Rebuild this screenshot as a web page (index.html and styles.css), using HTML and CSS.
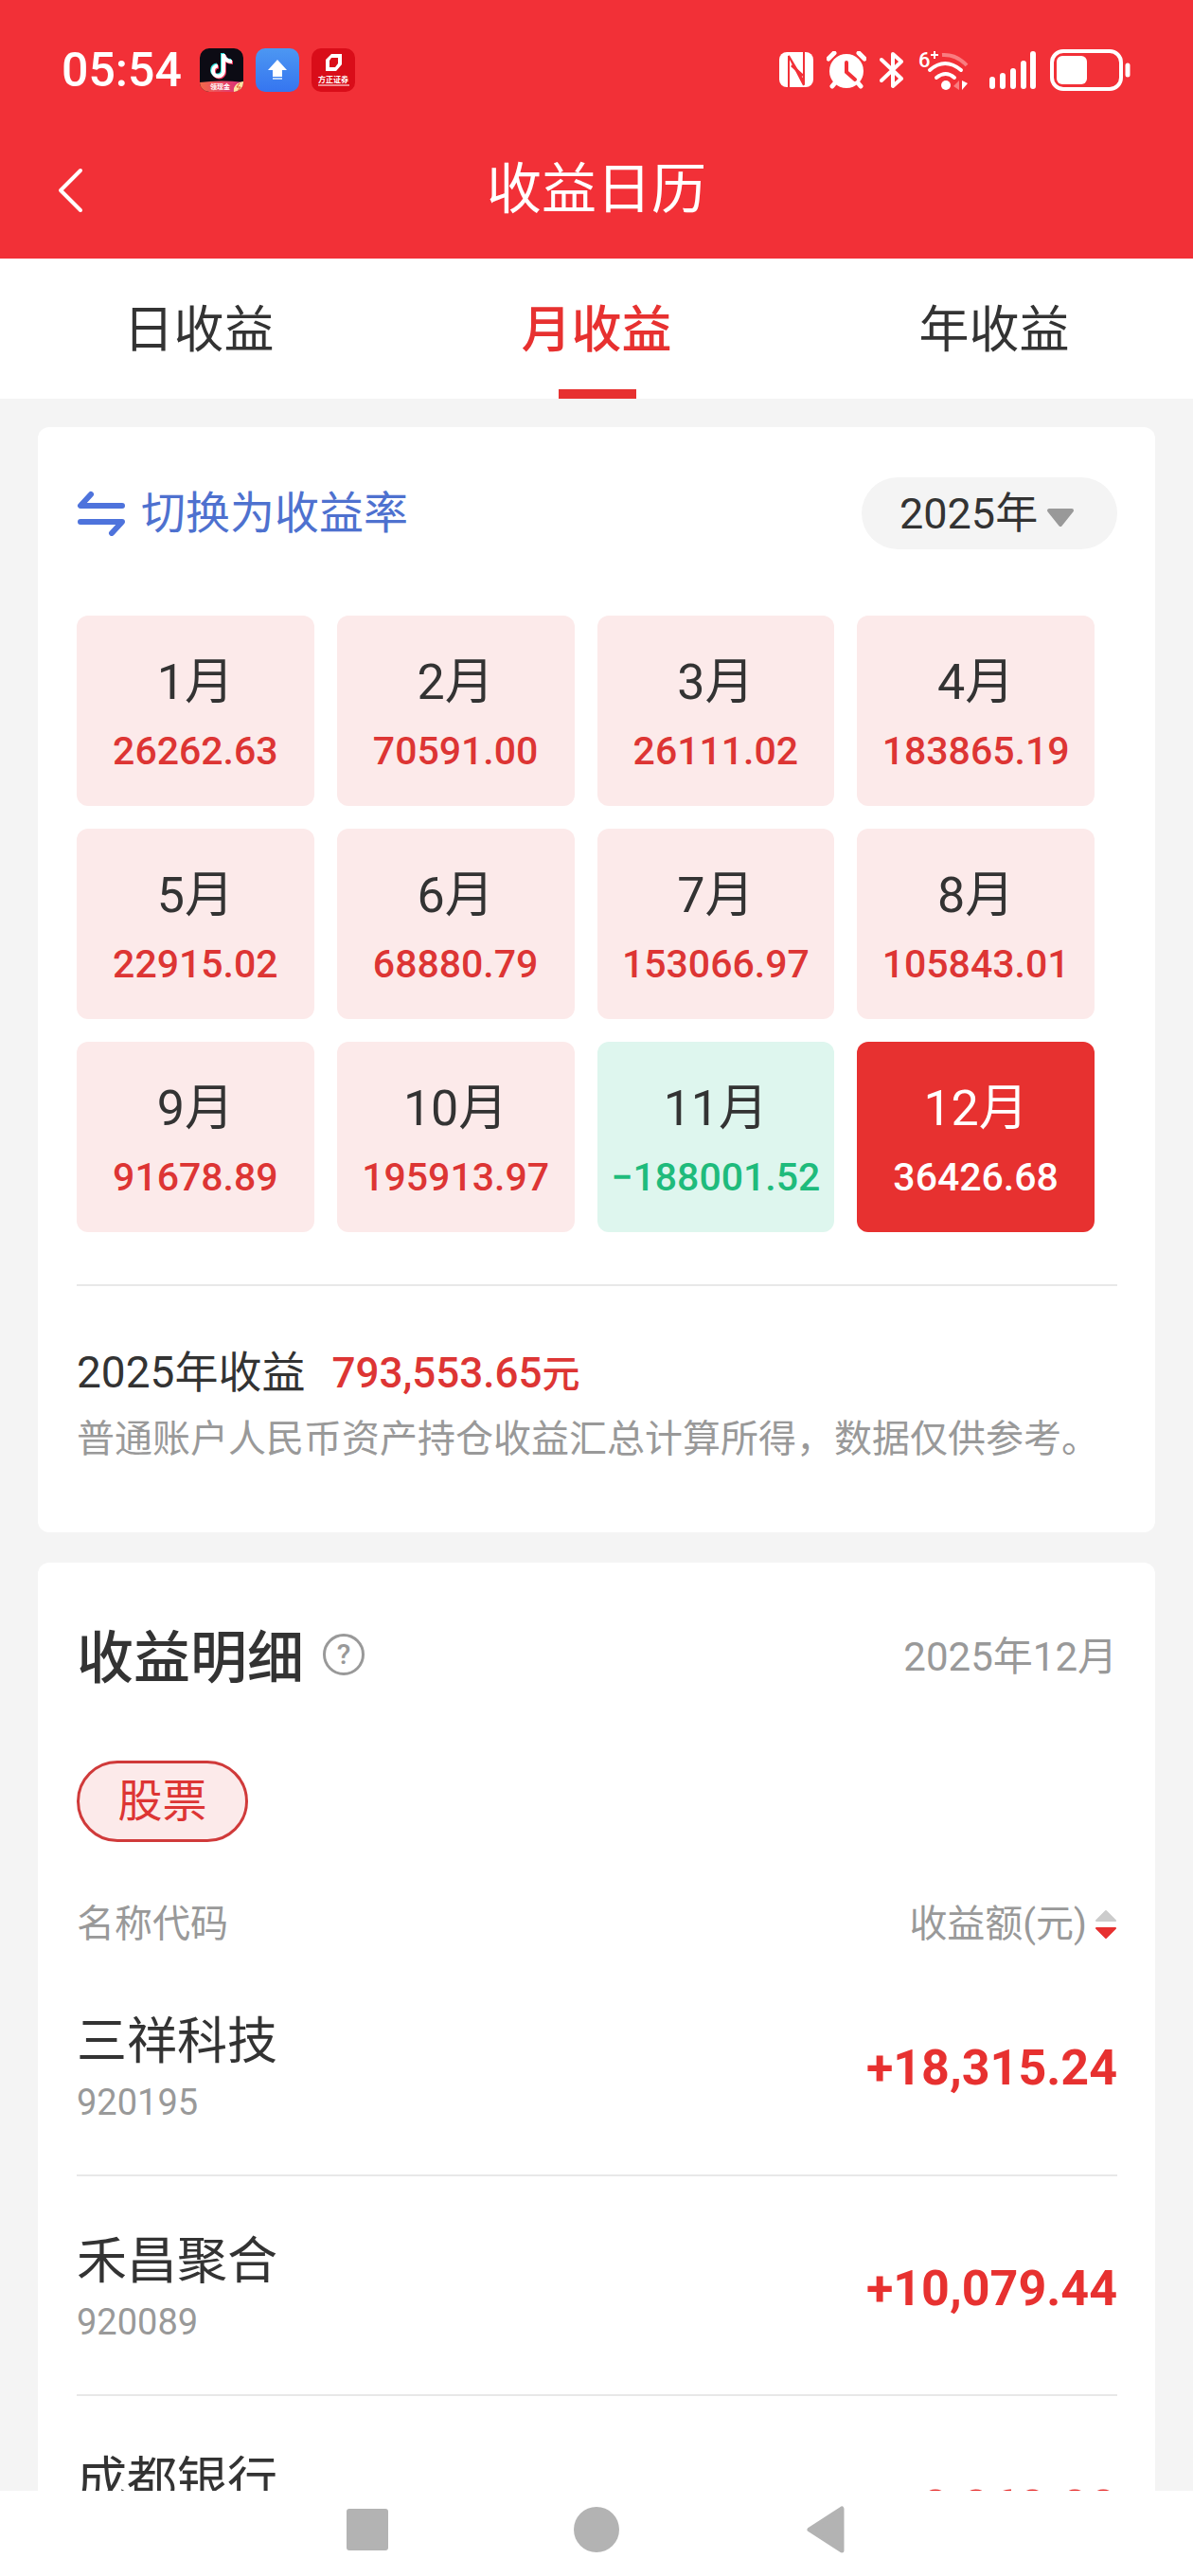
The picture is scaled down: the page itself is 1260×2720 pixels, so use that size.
FILE: index.html
```html
<!DOCTYPE html>
<html lang="zh-CN">
<head>
  <meta charset="UTF-8">
  <meta name="viewport" content="width=device-width, initial-scale=1.0">
  <title>收益日历</title>
  <link rel="stylesheet" href="styles.css">
</head>
<body>
  <header class="header">
    <!-- 状态栏 -->
    <div class="status-bar">
      <div class="status-left">
        <span class="time">05:54</span>
        <svg class="app-icon" viewBox="0 0 46 46">
          <defs>
            <clipPath id="app-clip"><rect width="46" height="46" rx="10"/></clipPath>
            <linearGradient id="cash" x1="0" x2="1"><stop offset="0" stop-color="#f4694a"/><stop offset="1" stop-color="#d92a7c"/></linearGradient>
            <linearGradient id="up" x1="0" x2="0" y1="0" y2="1"><stop offset="0" stop-color="#4c97f2"/><stop offset="1" stop-color="#3575f0"/></linearGradient>
          </defs>
          <g clip-path="url(#app-clip)">
            <rect width="46" height="46" fill="#0c0b14"/>
            <g fill="none" stroke-width="4">
              <path d="M24 5v18a5.500 5.500 0 1 1-6-5.500M24 6c1 4 4 7 9 7" stroke="#2fe3e0"/>
              <path d="M26 7v18a5.500 5.500 0 1 1-6-5.500M26 8c1 4 4 7 9 7" stroke="#f5355c"/>
              <path d="M25 6v18a5.500 5.500 0 1 1-6-5.500M25 7c1 4 4 7 9 7" stroke="#fff"/>
            </g>
            <path d="M0 36q23-3 46 0v10H0z" fill="url(#cash)"/>
            <text x="11" y="43" font-size="7" font-weight="700" fill="#fff">领现金</text>
            <path d="M36 46c-1-6 3-10 10-11v11z" fill="#ffe3a0"/>
            <path d="M42 37l-3 4h4l-3 4" fill="none" stroke="#e0552c"/>
          </g>
        </svg>
        <svg class="app-icon" viewBox="0 0 46 46">
          <rect width="46" height="46" rx="10" fill="url(#up)"/>
          <path d="M23 12l10 11h-5v7H18v-7h-5z" fill="#fff"/>
          <path d="M18 32h10" stroke="#bcd5fb" stroke-width="2"/>
        </svg>
        <svg class="app-icon" viewBox="0 0 46 46">
          <rect width="46" height="46" rx="10" fill="#d90d19"/>
          <path d="M21 6h11v11l-6 7H15V12zM21 10l-2 3v7h6l3-4v-6z" fill="#fff" fill-rule="evenodd"/>
          <text x="7" y="36" font-size="8" font-weight="700" fill="#fff">方正证券</text>
          <path d="M7 39h33" stroke="#f08a8f" stroke-width="2"/>
        </svg>
      </div>
      <div class="status-right">
        <svg width="36" height="38" viewBox="0 0 36 38">
          <rect width="36" height="37" rx="8" fill="#fff"/>
          <path d="M10 37V4l16 31M26 0v31L10 4" fill="none" stroke="#f23037" stroke-width="2"/>
          <path d="M13 14l12 11" fill="none" stroke="#f23037" stroke-width="3"/>
        </svg>
        <svg width="42" height="40" viewBox="0 0 42 40">
          <circle cx="21" cy="21" r="18" fill="#fff"/>
          <path d="M2 8l6-6M40 8l-6-6M6 37l5-6M36 37l-5-6" stroke="#fff" stroke-width="5" stroke-linecap="round"/>
          <path d="M21 12v10l9 8" fill="none" stroke="#f23037" stroke-width="4" stroke-linecap="round"/>
        </svg>
        <svg width="26" height="40" viewBox="0 0 26 40">
          <path d="M2 9l21 20-9 8V3l9 8L2 31" fill="none" stroke="#fff" stroke-width="4" stroke-linejoin="round" stroke-linecap="round"/>
        </svg>
        <svg class="wifi" width="54" height="44" viewBox="0 0 54 44">
          <text x="1" y="19" font-size="22" font-weight="500" fill="#fff">6</text>
          <path d="M14 6h8M18 2v8" stroke="#fff" stroke-width="2"/>
          <path d="M26 6q15-1 26 11" fill="none" stroke="#f97d80" stroke-width="4"/>
          <path d="M13 22q16-14 33 0M20 30q10-8 19 0" fill="none" stroke="#fff" stroke-width="4" stroke-linecap="round"/>
          <circle cx="30" cy="38" r="5" fill="#fff"/>
          <path d="M44 33v10l-6-4z" fill="#f97d80"/>
          <path d="M47 33v10l6-7z" fill="#fff"/>
        </svg>
        <svg class="signal" width="50" height="40" viewBox="0 0 50 40">
          <path d="M3 30v7M14 26v11M25 21v16M36 13v24M46 3v34" stroke="#fff" stroke-width="6" stroke-linecap="round"/>
        </svg>
        <svg width="86" height="44" viewBox="0 0 86 44">
          <rect x="2" y="2" width="73" height="40" rx="12" fill="none" stroke="#fff" stroke-width="4"/>
          <rect x="7" y="7" width="32" height="30" rx="6" fill="#fff"/>
          <path d="M82 17v10" stroke="#fff" stroke-width="5" stroke-linecap="round"/>
        </svg>
      </div>
    </div>
    <!-- 标题栏 -->
    <div class="title-bar">
      <button class="back" type="button" aria-label="返回">
        <svg width="28" height="48" viewBox="0 0 28 48"><path d="M25 3L4 24l21 21" fill="none" stroke="#fff" stroke-width="4" stroke-linecap="round" stroke-linejoin="round"/></svg>
      </button>
      <h1>收益日历</h1>
    </div>
  </header>

  <nav class="tabs">
    <a href="#day">日收益</a>
    <a href="#month" class="active">月收益</a>
    <a href="#year">年收益</a>
  </nav>

  <main class="content">
    <!-- 收益日历 -->
    <section class="card calendar">
      <div class="calendar-top">
        <button class="switch" type="button">
          <svg width="52" height="48" viewBox="0 0 52 48"><path d="M15 4L4 16h44M4 33h44L37 45" fill="none" stroke="#4e73dc" stroke-width="6" stroke-linecap="round" stroke-linejoin="round"/></svg>
          切换为收益率
        </button>
        <div class="year-picker">
          <select aria-label="选择年份">
            <option>2025年</option>
            <option>2024年</option>
          </select>
          <svg class="arrow" width="30" height="20" viewBox="0 0 30 20"><path d="M3 2h24L15 17z" fill="#999" stroke="#999" stroke-width="4" stroke-linejoin="round"/></svg>
        </div>
      </div>
      <div class="months">
        <button class="month" type="button"><span class="name">1月</span><span class="value">26262.63</span></button>
        <button class="month" type="button"><span class="name">2月</span><span class="value">70591.00</span></button>
        <button class="month" type="button"><span class="name">3月</span><span class="value">26111.02</span></button>
        <button class="month" type="button"><span class="name">4月</span><span class="value">183865.19</span></button>
        <button class="month" type="button"><span class="name">5月</span><span class="value">22915.02</span></button>
        <button class="month" type="button"><span class="name">6月</span><span class="value">68880.79</span></button>
        <button class="month" type="button"><span class="name">7月</span><span class="value">153066.97</span></button>
        <button class="month" type="button"><span class="name">8月</span><span class="value">105843.01</span></button>
        <button class="month" type="button"><span class="name">9月</span><span class="value">91678.89</span></button>
        <button class="month" type="button"><span class="name">10月</span><span class="value">195913.97</span></button>
        <button class="month loss" type="button"><span class="name">11月</span><span class="value">−188001.52</span></button>
        <button class="month selected" type="button"><span class="name">12月</span><span class="value">36426.68</span></button>
      </div>
      <div class="summary">
        <p class="total">2025年收益 <strong>793,553.65<small>元</small></strong></p>
        <p class="note">普通账户人民币资产持仓收益汇总计算所得，数据仅供参考。</p>
      </div>
    </section>

    <!-- 收益明细 -->
    <section class="card detail">
      <div class="detail-top">
        <h2>收益明细</h2>
        <button class="help" type="button" aria-label="说明">?</button>
        <span class="period">2025年12月</span>
      </div>
      <button class="tag" type="button">股票</button>
      <table class="stocks">
        <thead>
          <tr>
            <th>名称代码</th>
            <th>
              <button class="sort" type="button">收益额(元)
                <svg width="24" height="32" viewBox="0 0 24 32"><path d="M12 2l10 10H2z" fill="#ccc" stroke="#ccc" stroke-width="2" stroke-linejoin="round"/><path d="M12 30l10-10H2z" fill="#e73130" stroke="#e73130" stroke-width="2" stroke-linejoin="round"/></svg>
              </button>
            </th>
          </tr>
        </thead>
        <tbody>
          <tr>
            <td><span class="stock-name">三祥科技</span><span class="stock-code">920195</span></td>
            <td class="amount">+18,315.24</td>
          </tr>
          <tr>
            <td><span class="stock-name">禾昌聚合</span><span class="stock-code">920089</span></td>
            <td class="amount">+10,079.44</td>
          </tr>
          <tr>
            <td><span class="stock-name">成都银行</span><span class="stock-code">601838</span></td>
            <td class="amount">+8,268.88</td>
          </tr>
        </tbody>
      </table>
    </section>
  </main>

  <!-- 系统导航键 -->
  <footer class="system-nav">
    <button type="button" aria-label="最近任务"><svg width="50" height="50" viewBox="0 0 50 50"><rect x="3" y="3" width="44" height="44" rx="3" fill="#b3b3b3"/></svg></button>
    <button type="button" aria-label="主页"><svg width="50" height="50" viewBox="0 0 50 50"><circle cx="25" cy="25" r="24" fill="#b3b3b3"/></svg></button>
    <button type="button" aria-label="返回"><svg width="50" height="50" viewBox="0 0 50 50"><path d="M42 3v44L8 25z" fill="#b3b3b3" stroke="#b3b3b3" stroke-width="5" stroke-linejoin="round"/></svg></button>
  </footer>
</body>
</html>
```
FILE: styles.css
```css
* {
  box-sizing: border-box;
  margin: 0;
  padding: 0;
}

body {
  display: flex;
  flex-direction: column;
  height: 100vh;
  background: #f4f4f4;
  color: #333;
  font-family: Roboto, "Noto Sans CJK SC", sans-serif;
}

button,
select {
  border: none;
  background: none;
  color: inherit;
  font: inherit;
}

svg {
  display: block;
  flex: none;
}

/* 顶部 */
.header {
  background: #f23037;
  color: #fff;
}

.status-bar {
  display: flex;
  justify-content: space-between;
  align-items: center;
  height: 128px;
  padding: 20px 65px 0;
}

.status-left,
.status-right {
  display: flex;
  align-items: center;
}

.status-left {
  gap: 13px;
}

.status-right {
  gap: 14px;
}

.time {
  margin-right: 6px;
  font-size: 50px;
  font-weight: 500;
}

.app-icon {
  width: 46px;
  height: 46px;
}

.wifi {
  overflow: visible;
}

.signal {
  margin-left: 8px;
}

.title-bar {
  display: grid;
  grid-template-columns: 1fr auto 1fr;
  align-items: center;
  height: 145px;
  padding: 0 60px;
}

.title-bar h1 {
  padding-bottom: 12px;
  font-size: 58px;
  font-weight: 400;
}

.back {
  justify-self: start;
}

/* 标签页 */
.tabs {
  display: grid;
  grid-template-columns: repeat(3, 1fr);
  height: 148px;
  background: #fff;
}

.tabs a {
  position: relative;
  padding-top: 4px;
  color: #333;
  font-size: 53px;
  line-height: 144px;
  text-align: center;
  text-decoration: none;
}

.tabs .active {
  color: #e73130;
  font-weight: 500;
}

.tabs .active::after {
  content: "";
  position: absolute;
  bottom: 0;
  left: 50%;
  width: 82px;
  height: 10px;
  margin-left: -40px;
  background: #e73130;
}

/* 内容区 */
.content {
  flex: 1;
  min-height: 0;
  padding: 30px 40px 0;
  overflow-y: auto;
  scrollbar-width: none;
}

.card {
  margin-bottom: 32px;
  padding: 0 40px 0 41px;
  border-radius: 12px;
  background: #fff;
}

.calendar {
  padding-top: 53px;
  padding-bottom: 66px;
}

.calendar-top {
  display: flex;
  justify-content: space-between;
  align-items: center;
  margin-bottom: 70px;
}

.switch {
  display: flex;
  align-items: center;
  gap: 16px;
  color: #4e71cf;
  font-size: 47px;
  line-height: 76px;
}

.year-picker {
  position: relative;
}

.year-picker select {
  width: 270px;
  height: 76px;
  padding-left: 40px;
  border-radius: 38px;
  background: #f4f4f4;
  font-size: 45px;
  appearance: none;
}

.year-picker .arrow {
  position: absolute;
  top: 33px;
  right: 45px;
  pointer-events: none;
}

.months {
  display: grid;
  grid-template-columns: repeat(4, 1fr);
  gap: 24px;
  padding-right: 24px;
}

.month {
  display: flex;
  flex-direction: column;
  justify-content: center;
  align-items: center;
  height: 201px;
  padding-top: 8px;
  border-radius: 12px;
  background: #fceaea;
}

.month .name {
  font-size: 52px;
  line-height: 76px;
}

.month .value {
  color: #dd3534;
  font-size: 41px;
  font-weight: 500;
  line-height: 68px;
}

.month.loss {
  background: #def6ee;
}

.month.loss .value {
  color: #1fbb7c;
}

.month.selected {
  background: #e73130;
  color: #fff;
}

.month.selected .value {
  color: #fff;
}

.summary {
  margin-top: 55px;
  padding-top: 55px;
  border-top: 2px solid #e8e8e8;
}

.total {
  display: flex;
  align-items: baseline;
  gap: 28px;
  font-size: 46px;
  line-height: 72px;
}

.total strong {
  color: #dd3534;
  font-size: 44px;
  font-weight: 500;
}

.total small {
  font-size: 40px;
}

.note {
  color: #999;
  font-size: 40px;
  line-height: 64px;
}

/* 收益明细 */
.detail {
  padding-top: 53px;
}

.detail-top {
  display: flex;
  align-items: center;
  height: 88px;
  margin-bottom: 68px;
}

.detail-top h2 {
  padding-bottom: 4px;
  font-size: 60px;
  font-weight: 500;
}

.help {
  width: 44px;
  height: 44px;
  margin-left: 20px;
  border: 3px solid #999;
  border-radius: 50%;
  color: #999;
  font-size: 30px;
  font-weight: 500;
  line-height: 38px;
}

.period {
  margin-left: auto;
  padding-bottom: 4px;
  color: #999;
  font-size: 42px;
}

.tag {
  width: 181px;
  height: 86px;
  border: 3px solid #d03a3a;
  border-radius: 43px;
  background: #fceaea;
  color: #dd3534;
  font-size: 47px;
  line-height: 76px;
}

.stocks {
  width: 100%;
  margin-top: 55px;
  border-collapse: collapse;
}

.stocks th {
  height: 65px;
  padding-bottom: 2px;
  color: #999;
  font-size: 40px;
  font-weight: 400;
  line-height: 56px;
  text-align: left;
}

.sort {
  display: flex;
  align-items: center;
  gap: 8px;
  margin-left: auto;
}

.stocks td {
  height: 232px;
  padding-top: 6px;
  border-bottom: 2px solid #e8e8e8;
}

.stock-name,
.stock-code {
  display: block;
}

.stock-name {
  font-size: 53px;
  line-height: 72px;
}

.stock-code {
  color: #999;
  font-size: 38px;
  line-height: 56px;
}

.stocks .amount {
  color: #e73130;
  font-size: 52px;
  font-weight: 700;
  text-align: right;
}

/* 底部导航键 */
.system-nav {
  display: flex;
  justify-content: center;
  align-items: center;
  gap: 192px;
  height: 90px;
  padding-bottom: 8px;
  background: #fff;
}
```
